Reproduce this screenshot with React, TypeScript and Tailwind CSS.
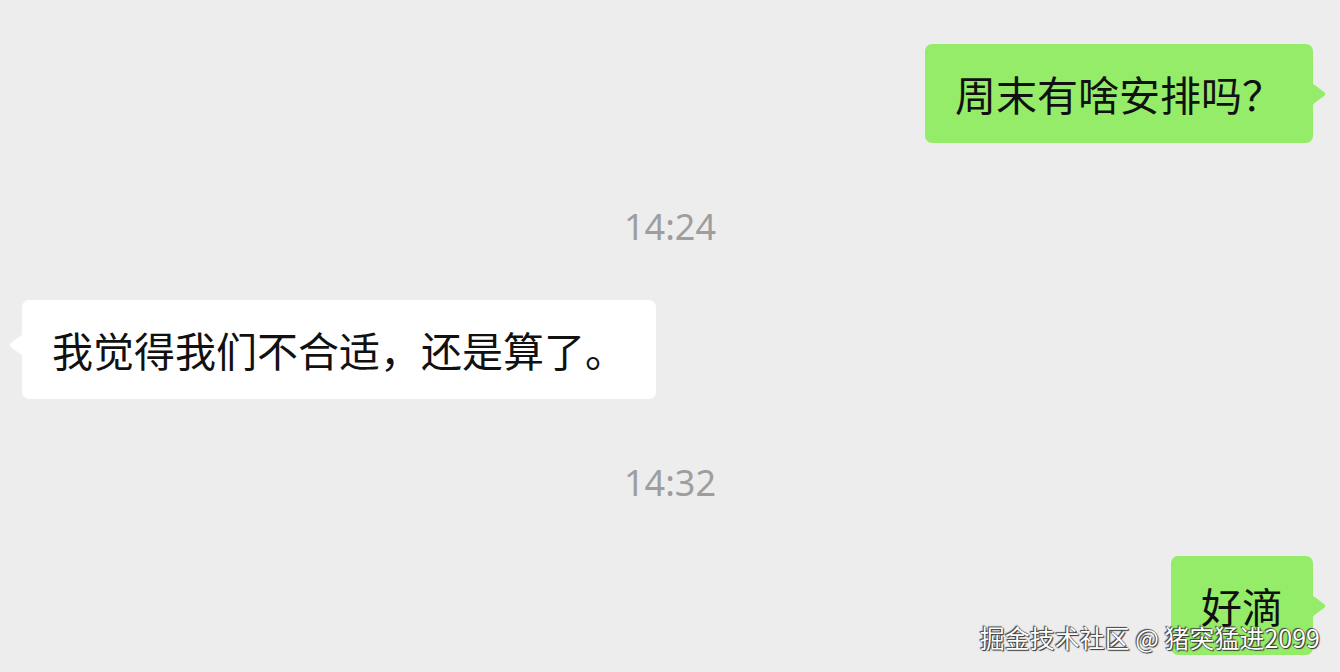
import React from 'react';

const FONT = '"Noto Sans CJK SC", "Noto Sans", sans-serif';

const Stamp: React.FC<{ time: string }> = ({ time }) => (
  <div
    className="mt-[64px] mb-[53px] h-[40px] text-center text-[36px] leading-[40px] text-[#9e9e9e]"
    style={{ fontFamily: '"Noto Sans", "Open Sans", sans-serif' }}
  >
    {time}
  </div>
);

const Bubble: React.FC<{ text: string; mine?: boolean }> = ({ text, mine }) => (
  <div className={`flex ${mine ? 'justify-end pr-[27px]' : 'justify-start pl-[22px]'}`}>
    <div
      className={`relative rounded-[7px] px-[30px] py-[21px] text-[41px] leading-[57px] text-[#111] ${
        mine ? 'bg-[#95ec69]' : 'bg-white'
      }`}
    >
      {text}
      {mine ? (
        <svg className="absolute right-[-14px] top-[39px]" width="15" height="22" viewBox="0 0 15 22">
          <path d="M0 0 L12 9 Q14.5 11 12 13 L0 22 Z" fill="#95ec69" />
        </svg>
      ) : (
        <svg className="absolute left-[-14px] top-[34px]" width="15" height="22" viewBox="0 0 15 22">
          <path d="M15 0 L3 9 Q0.5 11 3 13 L15 22 Z" fill="#ffffff" />
        </svg>
      )}
    </div>
  </div>
);

export default function App() {
  return (
    <div className="relative h-[672px] w-[1340px] overflow-hidden bg-[#ededed] pt-[44px]" style={{ fontFamily: FONT }}>
      <Bubble text="周末有啥安排吗？" mine />
      <Stamp time="14:24" />
      <Bubble text="我觉得我们不合适，还是算了。" />
      <Stamp time="14:32" />
      <Bubble text="好滴" mine />
      {/* watermark */}
      <div
        className="absolute right-[20px] bottom-[20px] text-[25px] leading-[30px] text-white"
        style={{ textShadow: '0 0 1px #222, 1px 1px 1px #333, -1px -1px 1px #444' }}
      >
        掘金技术社区 @ 猪突猛进2099
      </div>
    </div>
  );
}
